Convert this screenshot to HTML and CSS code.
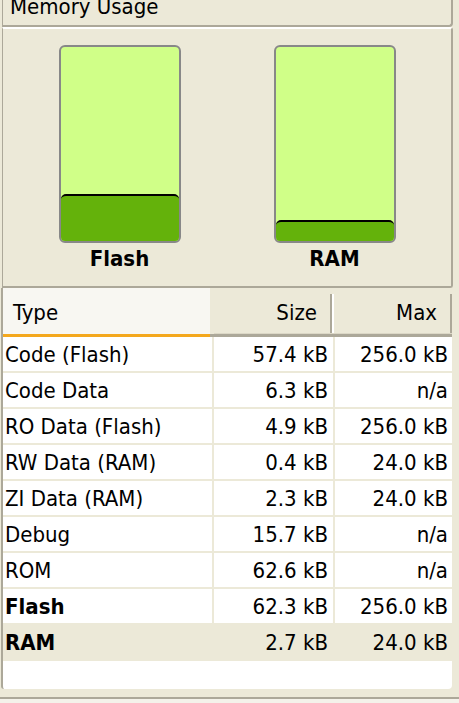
FILE: index.html
```html
<!DOCTYPE html>
<html>
<head>
<meta charset="utf-8">
<title>Memory Usage</title>
<link rel="stylesheet" href="styles.css">
</head>
<body>
<div class="window">
  <div class="title-panel"><span class="title">Memory Usage</span></div>
  <div class="chart-panel">
    <div class="gauge">
      <div class="bar"><div class="fill" style="height:47px"></div></div>
      <div class="gauge-label">Flash</div>
    </div>
    <div class="gauge">
      <div class="bar"><div class="fill" style="height:21px"></div></div>
      <div class="gauge-label">RAM</div>
    </div>
  </div>
  <div class="table-panel">
    <table class="usage">
      <colgroup>
        <col class="c-type">
        <col class="c-size">
        <col class="c-max">
      </colgroup>
      <thead>
        <tr>
          <th class="h-type">Type</th>
          <th class="h-size">Size</th>
          <th class="h-max">Max</th>
        </tr>
      </thead>
      <tbody>
        <tr><td class="type">Code (Flash)</td><td class="size">57.4 kB</td><td class="max">256.0 kB</td></tr>
        <tr><td class="type">Code Data</td><td class="size">6.3 kB</td><td class="max">n/a</td></tr>
        <tr><td class="type">RO Data (Flash)</td><td class="size">4.9 kB</td><td class="max">256.0 kB</td></tr>
        <tr><td class="type">RW Data (RAM)</td><td class="size">0.4 kB</td><td class="max">24.0 kB</td></tr>
        <tr><td class="type">ZI Data (RAM)</td><td class="size">2.3 kB</td><td class="max">24.0 kB</td></tr>
        <tr><td class="type">Debug</td><td class="size">15.7 kB</td><td class="max">n/a</td></tr>
        <tr><td class="type">ROM</td><td class="size">62.6 kB</td><td class="max">n/a</td></tr>
        <tr class="bold"><td class="type">Flash</td><td class="size">62.3 kB</td><td class="max">256.0 kB</td></tr>
        <tr class="bold selected"><td class="type">RAM</td><td class="size">2.7 kB</td><td class="max">24.0 kB</td></tr>
      </tbody>
    </table>
  </div>
  <div class="footer"></div>
</div>
</body>
</html>
```
FILE: styles.css
```css
* { box-sizing: border-box; }
html, body { margin: 0; padding: 0; }
body {
  background: #ECE9D8;
  font-family: "DejaVu Sans Condensed", "DejaVu Sans", sans-serif;
  font-size: 22px;
  color: #000;
  width: 459px;
  height: 703px;
  overflow: hidden;
}
.window {
  display: flex;
  flex-direction: column;
  height: 703px;
}
.title-panel {
  margin-left: 2px;
  width: 451px;
  height: 27px;
  flex: none;
  border-left: 1px solid #ACA899;
  border-right: 2px solid #ACA899;
  border-bottom: 2px solid #ACA899;
  border-bottom-right-radius: 4px;
  padding-left: 7px;
  line-height: 14px;
  white-space: nowrap;
}
.chart-panel {
  margin-left: 2px;
  width: 451px;
  height: 261px;
  flex: none;
  border-top: 2px solid #fff;
  border-left: 1px solid #ACA899;
  border-right: 2px solid #ACA899;
  border-bottom: 2px solid #ACA899;
  border-top-right-radius: 3px;
  border-bottom-right-radius: 3px;
  display: flex;
  justify-content: center;
  gap: 93px;
  padding-top: 16px;
}
.gauge {
  display: flex;
  flex-direction: column;
  align-items: center;
  width: 122px;
}
.bar {
  width: 122px;
  height: 198px;
  border: 2px solid #888888;
  border-radius: 6px;
  background: #D0FF88;
  display: flex;
  flex-direction: column;
  justify-content: flex-end;
  overflow: hidden;
}
.fill {
  background: #64B20B;
  border-top: 2px solid #000;
  border-radius: 5px 5px 0 0;
}
.gauge-label {
  margin-top: 3px;
  line-height: 26px;
  font-weight: bold;
}
.table-panel {
  margin-left: 1px;
  width: 451px;
  height: 401px;
  flex: none;
  border-left: 2px solid #ACA899;
  background: #fff;
  border-bottom-right-radius: 4px;
  border-bottom-left-radius: 3px;
  overflow: hidden;
}
.usage {
  border-collapse: separate;
  border-spacing: 0;
  table-layout: fixed;
  width: 449px;
}
.c-type { width: 211px; }
.c-size { width: 121px; }
.c-max { width: 117px; }
.usage th {
  font-weight: normal;
  line-height: 43px;
  padding: 3px 0 0 0;
  text-align: right;
  white-space: nowrap;
  background-color: #ECE9D8;
  border-bottom: 3px solid #ACA899;
  box-shadow: inset 0 -1px 0 #DCD8C7;
}
.usage th.h-type {
  text-align: left;
  padding-left: 10px;
  padding-bottom: 3px;
  border-bottom: none;
  box-shadow: none;
  background:
    linear-gradient(to right, #F4A81D 207px, #ACA899 207px) left bottom / 100% 3px no-repeat,
    linear-gradient(to right, #F8F7F2 207px, #ECE9D8 207px);
}
.usage th.h-size {
  padding-right: 18px;
  background-image: linear-gradient(to right, transparent 116px, #ACA899 116px, #ACA899 118px, #fff 118px, #fff 120px, transparent 120px);
  background-size: 100% 39px;
  background-position: 0 6px;
  background-repeat: no-repeat;
}
.usage th.h-max {
  padding-right: 15px;
  background-image: linear-gradient(to right, transparent 115px, #ACA899 115px, #ACA899 117px);
  background-size: 100% 39px;
  background-position: 0 6px;
  background-repeat: no-repeat;
}
.usage td {
  line-height: 32px;
  padding: 2px 0 0 0;
  white-space: nowrap;
  border-bottom: 2px solid #ECE9D8;
}
.usage td.type {
  padding-left: 2px;
  border-right: 2px solid #ECE9D8;
}
.usage td.size {
  text-align: right;
  padding-right: 5px;
  border-right: 2px solid #ECE9D8;
}
.usage td.max {
  text-align: right;
  padding-right: 4px;
}
.usage tr.bold td.type { font-weight: bold; }
.usage tr.selected td { background: #ECE9D8; }
.footer {
  margin-top: 8px;
  border-top: 2px solid #ACA899;
  background: #F4F2EA;
  flex: 1;
}
```
